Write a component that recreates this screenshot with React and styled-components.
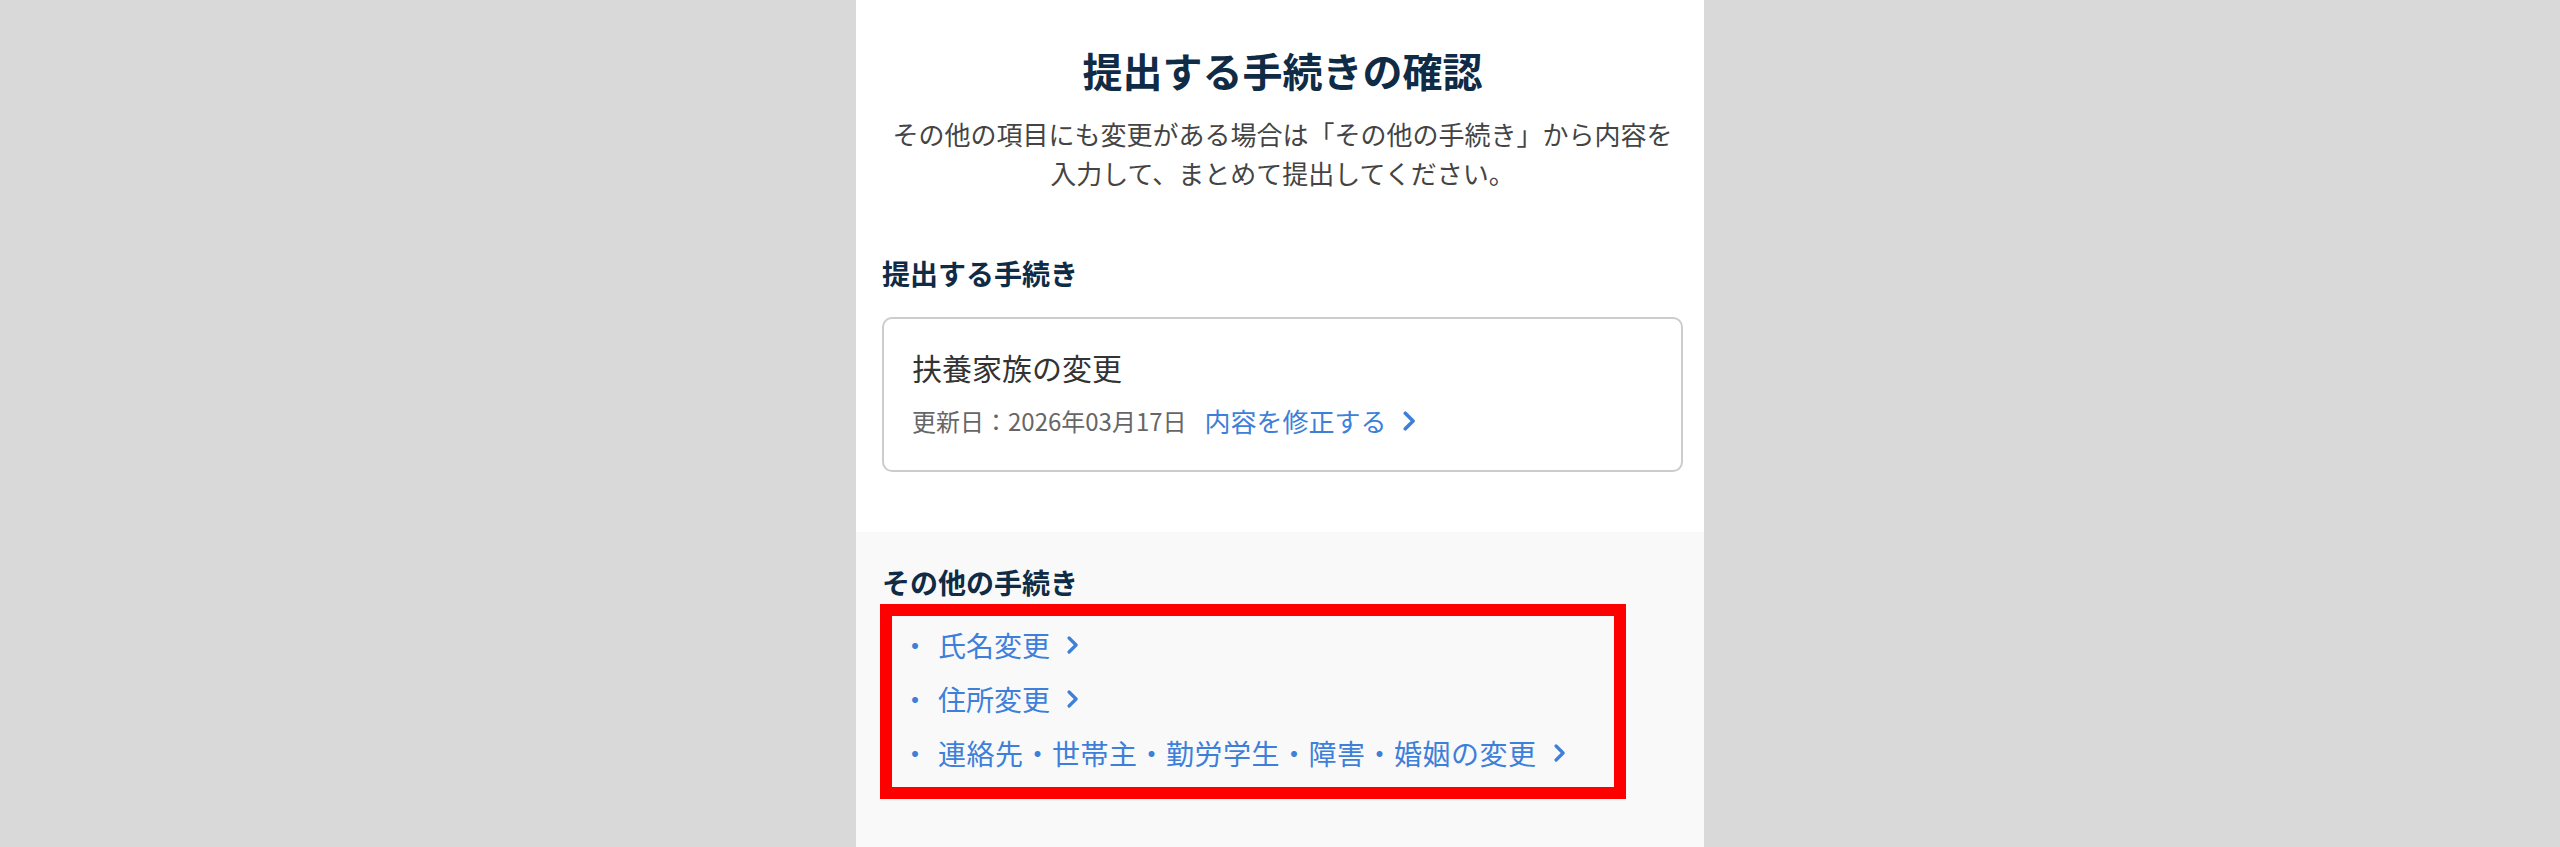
import React from "react";
import styled, { createGlobalStyle } from "styled-components";

const GlobalStyle = createGlobalStyle`
  html, body {
    margin: 0;
    padding: 0;
    background: #d9d9d9;
    font-family: "Noto Sans CJK JP", "Noto Sans", sans-serif;
  }
  * { box-sizing: border-box; }
`;

const Page = styled.main`
  width: 848px;
  min-height: 847px;
  margin: 0 auto;
  background: #ffffff;
  display: flex;
  flex-direction: column;
`;

const Intro = styled.header`
  padding: 40px 21px 0 26px;
  text-align: center;
`;

const Title = styled.h1`
  margin: 0;
  font-size: 40px;
  line-height: 60px;
  font-weight: 700;
  color: #0f2b45;
`;

const Lead = styled.p`
  margin: 14px 0 0;
  font-size: 26px;
  line-height: 39px;
  color: #444444;
`;

const Section = styled.section`
  padding: ${(p) => p.$pad};
  background: ${(p) => p.$bg || "transparent"};
  flex: ${(p) => (p.$grow ? 1 : "none")};
`;

const SectionHeading = styled.h2`
  margin: 0;
  font-size: 28px;
  line-height: 42px;
  font-weight: 700;
  color: #0f2b45;
`;

const Card = styled.div`
  margin-top: 23px;
  height: 155px;
  border: 2px solid #cccccc;
  border-radius: 10px;
  padding: 26px 28px 0;
  display: flex;
  flex-direction: column;
  gap: 13px;
`;

const CardTitle = styled.div`
  font-size: 30px;
  line-height: 45px;
  color: #333333;
`;

const Meta = styled.div`
  display: flex;
  align-items: center;
  gap: 18px;
  font-size: 24px;
  line-height: 36px;
  color: #666666;
`;

const Link = styled.a`
  display: inline-flex;
  align-items: center;
  gap: ${(p) => p.$gap || 17}px;
  color: #3d7fd9;
  text-decoration: none;
  font-size: ${(p) => p.$size || 24}px;
  letter-spacing: ${(p) => p.$track || 0}px;
  cursor: pointer;
`;

const Highlight = styled.div`
  margin-top: 1px;
  margin-left: -2px;
  width: 746px;
  border: 12px solid #ff0000;
  padding: 2px 9px 7px;
`;

const List = styled.ul`
  list-style: none;
  margin: 0;
  padding: 0;
`;

const Item = styled.li`
  display: flex;
  align-items: center;
  height: 54px;
  font-size: 28px;
  color: #3d7fd9;
`;

const Bullet = styled.span`
  width: 28px;
  text-align: center;
  margin-right: 9px;
  color: #3d7fd9;
`;

const Chevron = ({ h = 18 }) => (
  <svg width={h * 0.62} height={h} viewBox="0 0 11 18" fill="none">
    <polyline
      points="2,2 9,9 2,16"
      stroke="#3d7fd9"
      strokeWidth="3.2"
      strokeLinecap="round"
      strokeLinejoin="round"
    />
  </svg>
);

const others = [
  { label: "氏名変更", track: 0 },
  { label: "住所変更", track: 0 },
  { label: "連絡先・世帯主・勤労学生・障害・婚姻の変更", track: 0.5 },
];

export default function App() {
  return (
    <>
      <GlobalStyle />
      <Page>
        <Intro>
          <Title>提出する手続きの確認</Title>
          <Lead>
            その他の項目にも変更がある場合は「その他の手続き」から内容を
            <br />
            入力して、まとめて提出してください。
          </Lead>
        </Intro>

        <Section $pad="60px 21px 60px 26px">
          <SectionHeading>提出する手続き</SectionHeading>
          <Card>
            <CardTitle>扶養家族の変更</CardTitle>
            <Meta>
              <span>更新日：2026年03月17日</span>
              <Link $size={26} $gap={16}>
                内容を修正する
                <Chevron h={20} />
              </Link>
            </Meta>
          </Card>
        </Section>

        <Section $pad="29px 21px 40px 26px" $bg="#f9f9f9" $grow>
          <SectionHeading>その他の手続き</SectionHeading>
          <Highlight>
            <List>
              {others.map((o) => (
                <Item key={o.label}>
                  <Bullet>・</Bullet>
                  <Link $size={28} $track={o.track}>
                    {o.label}
                    <Chevron h={18} />
                  </Link>
                </Item>
              ))}
            </List>
          </Highlight>
        </Section>
      </Page>
    </>
  );
}
